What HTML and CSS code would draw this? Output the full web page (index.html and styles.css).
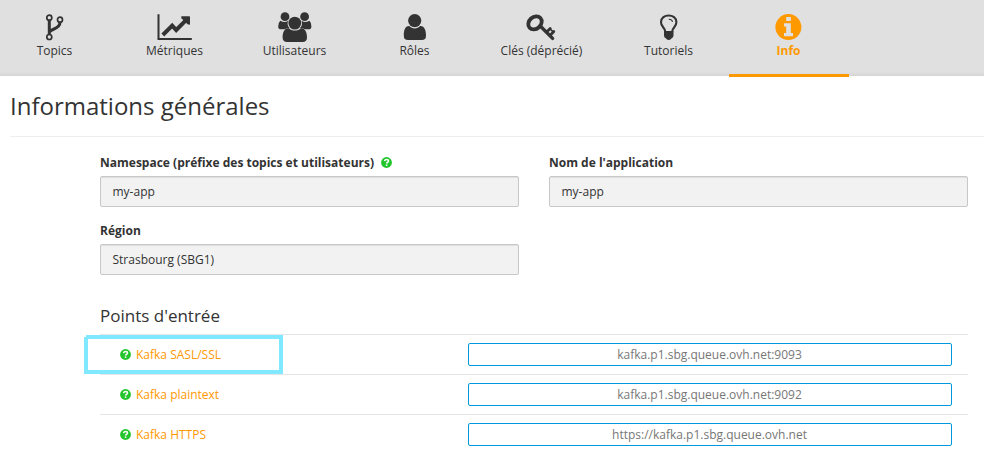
FILE: index.html
```html
<!DOCTYPE html>
<html lang="fr">
<head>
<meta charset="utf-8">
<title>Informations générales</title>
<link rel="stylesheet" href="styles.css">
</head>
<body>
<svg class="defs" width="0" height="0" aria-hidden="true">
  <symbol id="help" viewBox="0 0 11 11">
    <circle cx="5.5" cy="5.5" r="5.4" fill="#22c52c"/>
    <path d="M3.5 4.2C3.8 2.9 4.6 2.6 5.6 2.6C6.8 2.6 7.5 3.2 7.5 4.1C7.5 5.3 5.6 5.2 5.6 6.6" fill="none" stroke="#fff" stroke-width="1.5"/>
    <path d="M4.8 7.4h1.6v1.5H4.8z" fill="#fff"/>
  </symbol>
</svg>
<nav class="tabs">
  <a class="tab">
    <svg class="icon" viewBox="0 0 40 32"><g fill="none" stroke="#333" stroke-width="1.7"><circle cx="14.3" cy="6.7" r="2.5"/><circle cx="25" cy="8.7" r="2.5"/><circle cx="14.3" cy="26" r="2.5"/></g><path d="M14.3 9.5V23.5M25 11.3C25 18.2 17 17.2 14.5 20.8" fill="none" stroke="#333" stroke-width="3"/></svg>
    <span>Topics</span>
  </a>
  <a class="tab">
    <svg class="icon" viewBox="0 0 40 32"><path d="M3.5 3.2V28H36.8" fill="none" stroke="#333" stroke-width="2"/><path d="M7.8 24L17.2 14.7L21.2 19L30.8 9.4" fill="none" stroke="#333" stroke-width="4"/><path d="M26.2 5.2H34.2Q35 5.2 35 6V13.8L32.5 13.3L26.5 7.2Z" fill="#333"/></svg>
    <span>Métriques</span>
  </a>
  <a class="tab">
    <svg class="icon" viewBox="0 0 40 32"><g fill="#333"><circle cx="10" cy="5.7" r="4.4"/><circle cx="29.6" cy="5.7" r="4.4"/><path d="M5.3 9.7Q10 12.2 13 9.8Q11.6 15 14.8 17.2Q11.8 17 9.3 18.3H6.2Q3.2 18.3 3.2 15.4Q3.2 11.5 5.3 9.7ZM34.4 9.7Q29.6 12.2 26.6 9.8Q28 15 24.8 17.2Q27.8 17 30.3 18.3H33.4Q36.4 18.3 36.4 15.4Q36.4 11.5 34.4 9.7Z"/><circle cx="19.8" cy="12.1" r="6.4"/><path d="M13.7 17.2C16.7 20.4 22.9 20.4 25.9 17.2C30.4 16.9 32 21.6 32 26.6Q32 31 27.6 31H12Q7.6 31 7.6 26.6C7.6 21.6 9.2 16.9 13.7 17.2Z"/></g></svg>
    <span>Utilisateurs</span>
  </a>
  <a class="tab">
    <svg class="icon" viewBox="0 0 40 32"><g fill="#333"><circle cx="19.7" cy="9.6" r="6.6"/><path d="M14.3 15.1C17 18.2 22.4 18.2 25.1 15.1C29.5 14.8 31 19.6 31 24.4Q31 29 26.8 29H13Q8.8 29 8.8 24.4C8.8 19.6 10 14.8 14.3 15.1Z"/></g></svg>
    <span>Rôles</span>
  </a>
  <a class="tab tab-wide">
    <svg class="icon" viewBox="0 0 40 32"><ellipse cx="13" cy="11.9" rx="7.3" ry="5.9" transform="rotate(-42 13 11.9)" fill="none" stroke="#333" stroke-width="3.8"/><path d="M18 14.8L30.6 27.4" fill="none" stroke="#333" stroke-width="3.4" stroke-linecap="round"/><path d="M24.6 21L28.2 17.4M28 24.4L31.8 20.6" fill="none" stroke="#333" stroke-width="2.8" stroke-linecap="round"/><path d="M27.6 17.4L31.8 21.6" stroke="#333" stroke-width="1.5"/></svg>
    <span>Clés (déprécié)</span>
  </a>
  <a class="tab">
    <svg class="icon" viewBox="0 0 40 32"><path d="M16.2 20.5C16.2 16.8 12 16 12 11.2C12 6.8 15.8 4.5 19.7 4.5S27.4 6.8 27.4 11.2C27.4 16 23.2 16.8 23.2 20.5" fill="none" stroke="#333" stroke-width="2.1"/><path d="M15 20H24.5V24.5Q24.4 26.5 22.7 27.3Q21.7 29 19.7 29Q17.7 29 16.8 27.3Q15 26.5 15 24.5Z" fill="#333"/><path d="M19.8 8.3Q23.2 8.3 23.4 11" fill="none" stroke="#333" stroke-width="1.1"/></svg>
    <span>Tutoriels</span>
  </a>
  <a class="tab active">
    <svg class="icon" viewBox="0 0 40 32"><circle cx="19.4" cy="16.1" r="13" fill="#ff9900"/><path d="M17.2 6.1H21.8V10H17.2ZM15 12.2H21.8V22H24V25.2H15V22H17.2V15.4H15Z" fill="#e0e0e0"/></svg>
    <span>Info</span>
  </a>
</nav>
<main>
  <h1>Informations générales</h1>
  <div class="content">
    <form class="fields">
      <div class="field"><label>Namespace (préfixe des topics et utilisateurs)<svg class="help"><use href="#help"/></svg></label><div class="value">my-app</div></div>
      <div class="field"><label>Nom de l'application</label><div class="value">my-app</div></div>
      <div class="field"><label>Région</label><div class="value">Strasbourg (SBG1)</div></div>
    </form>
    <h2>Points d'entrée</h2>
    <div class="row">
      <div class="name"><svg class="help"><use href="#help"/></svg>Kafka SASL/SSL</div>
      <div class="endpoint">kafka.p1.sbg.queue.ovh.net:9093</div>
      <svg class="highlight" viewBox="0 0 199 39"><path d="M2 0H199V39H0V2H2ZM4 4V35H195V4Z" fill="#80e8ff" fill-rule="evenodd"/></svg>
    </div>
    <div class="row">
      <div class="name"><svg class="help"><use href="#help"/></svg>Kafka plaintext</div>
      <div class="endpoint">kafka.p1.sbg.queue.ovh.net:9092</div>
    </div>
    <div class="row">
      <div class="name"><svg class="help"><use href="#help"/></svg>Kafka HTTPS</div>
      <div class="endpoint">https://kafka.p1.sbg.queue.ovh.net</div>
    </div>
  </div>
</main>
</body>
</html>
```
FILE: styles.css
```css
* { box-sizing: border-box; }
body {
  margin: 0;
  height: 470px;
  overflow: hidden;
  background: #fff;
  color: #333;
  font: 12px/18px "Open Sans", "Noto Sans", sans-serif;
}
.defs { display: block; }
.tabs {
  display: flex;
  height: 76px;
  background: linear-gradient(#e0e0e0 0, #e0e0e0 72px, #d5d5d5 76px);
}
.tab {
  flex: 0 0 120px;
  height: 77px;
  padding-top: 11px;
  display: flex;
  flex-direction: column;
  align-items: center;
}
.tab:first-child { margin-left: -5px; }
.tab-wide { flex-basis: 134px; }
.tab.active {
  color: #ff9900;
  font-weight: 700;
  border-bottom: 3px solid #ff9900;
}
.icon { width: 40px; height: 32px; flex: none; }
.tab span { margin-top: -1px; padding-right: 1px; }
main { padding-left: 10px; }
h1 {
  margin: 0;
  height: 61px;
  padding-top: 12px;
  border-bottom: 1px solid #eee;
  font-size: 24px;
  line-height: 36px;
  font-weight: 400;
}
.content { padding: 16px 16px 0 90px; }
.fields {
  display: grid;
  grid-template-columns: 419px 419px;
  gap: 14px 30px;
}
.field label {
  display: flex;
  align-items: center;
  height: 19px;
  font-weight: 700;
}
.field .help { margin-left: 7px; }
.help { width: 11px; height: 11px; flex: none; }
.value {
  height: 31px;
  margin-top: 4px;
  padding: 6px 11.5px 4px;
  background: #f2f2f2;
  border: 1px solid #c8c8c8;
  border-radius: 2px;
  box-shadow: inset 0 1px 1px rgba(0, 0, 0, .08);
}
h2 {
  margin: 28px 0 0;
  height: 31px;
  font-size: 17px;
  line-height: 26px;
  font-weight: 400;
}
.row {
  position: relative;
  display: flex;
  align-items: center;
  height: 40px;
  padding: 0 16px 0 20px;
  border-top: 1px solid #e5e5e5;
}
.name {
  display: flex;
  align-items: center;
  width: 348px;
  gap: 5px;
  color: #ff9900;
}
.endpoint {
  flex: 1;
  height: 23px;
  padding-right: 1px;
  line-height: 21px;
  border: 1px solid #0099dd;
  border-radius: 2px;
  background: #fff;
  color: #777;
  text-align: center;
}
.highlight {
  position: absolute;
  left: -16px;
  top: 0;
  width: 199px;
  height: 39px;
}
```
